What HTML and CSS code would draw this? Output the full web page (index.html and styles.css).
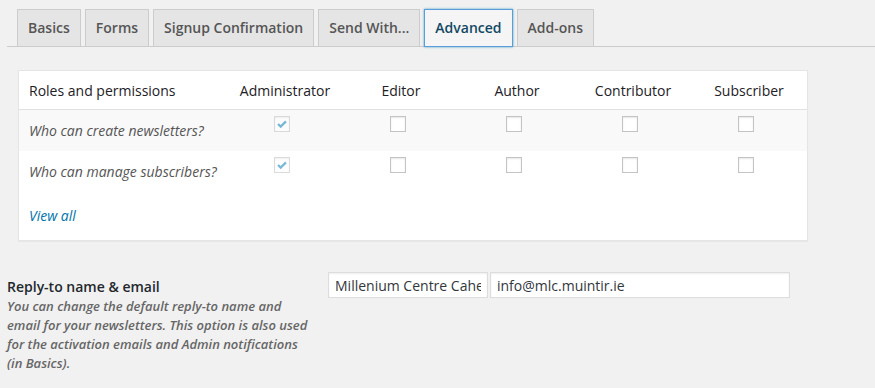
FILE: index.html
```html
<!DOCTYPE html>
<html>
    <head>
        <meta charset="UTF-8">
        <title>Newsletter Settings - Advanced</title>
        <link rel="stylesheet" href="styles.css">
    </head>
    <body>
        <div class="tabs">
            <a class="tab">Basics</a>
            <a class="tab">Forms</a>
            <a class="tab">Signup Confirmation</a>
            <a class="tab">Send With...</a>
            <a class="tab tab-active">Advanced</a>
            <a class="tab">Add-ons</a>
        </div>

        <div class="card">
            <div class="perm-row perm-head">
                <div class="perm-label">Roles and permissions</div>
                <div class="perm-col">Administrator</div>
                <div class="perm-col">Editor</div>
                <div class="perm-col">Author</div>
                <div class="perm-col">Contributor</div>
                <div class="perm-col">Subscriber</div>
            </div>
            <div class="perm-row perm-alt">
                <div class="perm-label perm-question">Who can create newsletters?</div>
                <div class="perm-col"><span class="check check-on check-disabled"><svg viewBox="0 0 16 16"><polyline points="3.5,8 6.5,11 12.5,5" /></svg></span></div>
                <div class="perm-col"><span class="check"></span></div>
                <div class="perm-col"><span class="check"></span></div>
                <div class="perm-col"><span class="check"></span></div>
                <div class="perm-col"><span class="check"></span></div>
            </div>
            <div class="perm-row">
                <div class="perm-label perm-question">Who can manage subscribers?</div>
                <div class="perm-col"><span class="check check-on check-disabled"><svg viewBox="0 0 16 16"><polyline points="3.5,8 6.5,11 12.5,5" /></svg></span></div>
                <div class="perm-col"><span class="check"></span></div>
                <div class="perm-col"><span class="check"></span></div>
                <div class="perm-col"><span class="check"></span></div>
                <div class="perm-col"><span class="check"></span></div>
            </div>
            <div class="perm-footer">
                <a class="view-all">View all</a>
            </div>
        </div>

        <div class="setting">
            <div class="setting-label">
                <div class="setting-title">Reply-to name &amp; email</div>
                <div class="setting-desc">You can change the default reply-to name and email for your newsletters. This option is also used for the activation emails and Admin notifications (in Basics).</div>
            </div>
            <div class="setting-fields">
                <input class="field field-name" type="text" value="Millenium Centre Caherciveen" />
                <input class="field field-email" type="text" value="info@mlc.muintir.ie" />
            </div>
        </div>
    </body>
</html>
```

FILE: styles.css
```css
html, body {
    margin: 0;
    padding: 0;
}
body {
    background-color: #f1f1f1;
    font-family: "Open Sans", "Liberation Sans", sans-serif;
    font-size: 14px;
    color: #23282d;
    padding: 9px 0 0 7px;
}
.tabs {
    display: flex;
    gap: 4px;
    padding-left: 10px;
    border-bottom: 1px solid #ccc;
}
.tab {
    display: block;
    height: 36px;
    line-height: 36px;
    padding: 0 10px;
    border: 1px solid #ccc;
    border-bottom: none;
    background-color: #e5e5e5;
    color: #555;
    font-weight: 600;
}
.tab-active {
    background-color: #f5f5f5;
    color: #124964;
    border: 1px solid #5b9dd9;
    margin-bottom: -1px;
    box-shadow: 0 0 2px rgba(30,140,190,.8);
}
.card {
    width: 788px;
    margin: 23px 0 0 11px;
    background-color: #fff;
    border: 1px solid #e5e5e5;
    box-shadow: 0 1px 1px rgba(0,0,0,.04);
}
.perm-row {
    display: grid;
    grid-template-columns: 1fr repeat(5, 116px);
    height: 41px;
}
.perm-head {
    height: 38px;
    border-bottom: 1px solid #e1e1e1;
    align-items: center;
    font-weight: 500;
    color: #1d2125;
}
.perm-head .perm-col {
    text-align: center;
}
.perm-alt {
    background-color: #f9f9f9;
}
.perm-label {
    padding-left: 10px;
    align-self: center;
}
.perm-question {
    font-style: italic;
    color: #555;
}
.perm-col {
    text-align: center;
}
.check {
    display: inline-block;
    box-sizing: border-box;
    width: 16px;
    height: 16px;
    margin: 6px 6px 0 0;
    border: 1px solid #c4c4c4;
    background-color: #fff;
    box-shadow: inset 0 1px 2px rgba(0,0,0,.1);
    vertical-align: top;
}
.check-disabled {
    opacity: .6;
}
.check > svg {
    display: block;
    width: 14px;
    height: 14px;
}
.check > svg polyline {
    fill: none;
    stroke: #1e8cbe;
    stroke-width: 2.6;
}
.perm-footer {
    padding: 14px 10px;
    height: 20px;
    line-height: 20px;
}
.view-all {
    color: #0073aa;
    font-style: italic;
}
.setting {
    display: flex;
    margin-top: 31px;
}
.setting-label {
    width: 304px;
    margin-right: 17px;
    padding-top: 5px;
}
.setting-title {
    font-weight: 600;
    line-height: 20px;
}
.setting-desc {
    font-size: 13px;
    line-height: 19px;
    font-style: italic;
    font-weight: 600;
    color: #666;
}
.setting-fields {
    display: flex;
    gap: 2px;
    align-items: flex-start;
}
.field {
    box-sizing: border-box;
    height: 26px;
    padding: 2px 6px;
    border: 1px solid #ddd;
    box-shadow: inset 0 1px 2px rgba(0,0,0,.07);
    background-color: #fff;
    font-family: "Open Sans", "Liberation Sans", sans-serif;
    font-size: 14px;
    color: #32373c;
    outline: none;
}
.field-name {
    width: 160px;
}
.field-email {
    width: 300px;
}
```
